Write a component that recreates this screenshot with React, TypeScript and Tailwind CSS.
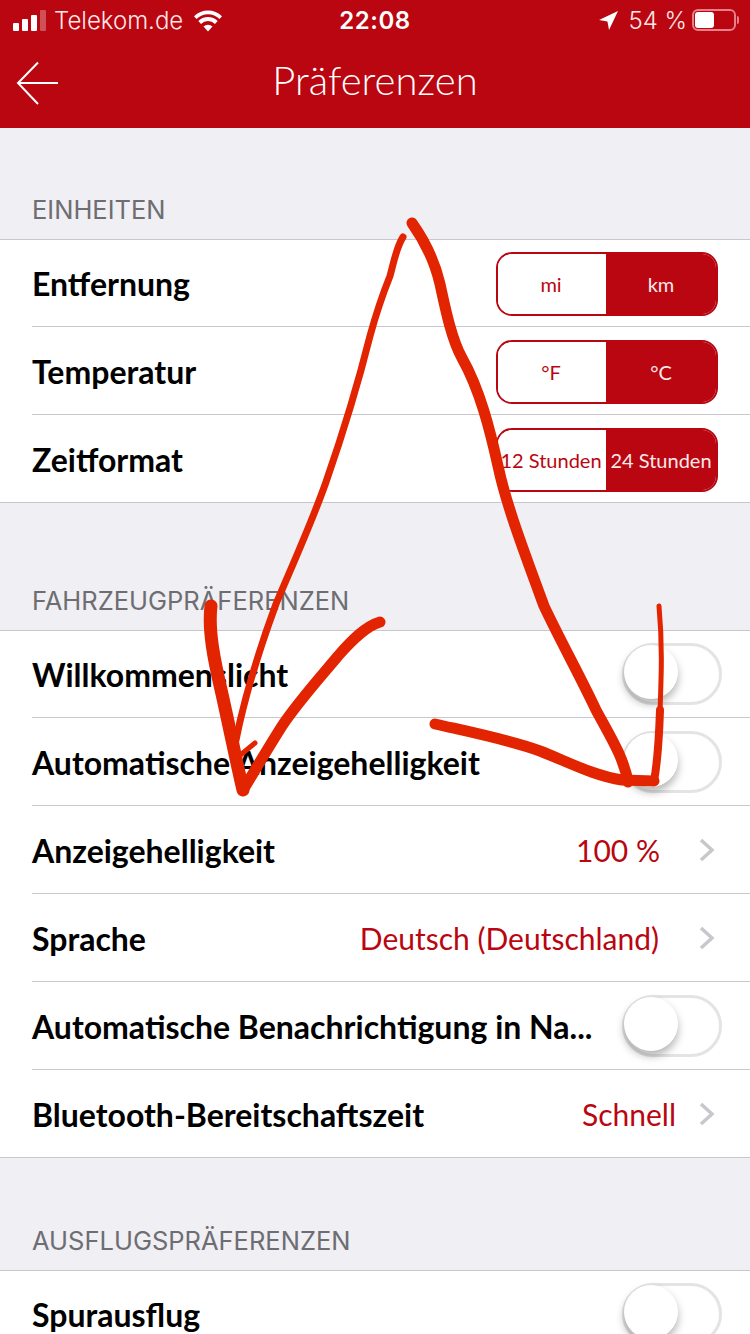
const lato = "font-['Lato','Noto_Sans',sans-serif]";

function Toggle() {
  return (
    <div className="relative w-[100px] h-[62px] rounded-full border-[3px] border-[#e4e4e4] bg-white shrink-0">
      <div className="absolute left-[-1px] top-[-1px] w-[54px] h-[54px] rounded-full bg-white shadow-[0_5px_8px_rgba(0,0,0,0.3)]" />
    </div>
  );
}

function Chevron() {
  return (
    <svg width="18" height="26" viewBox="0 0 18 26" className="shrink-0" fill="none">
      <path d="M3 3l11 10L3 23" stroke="#c7c7cc" strokeWidth="3.5" />
    </svg>
  );
}

function Segment({ a, b }: { a: string; b: string }) {
  return (
    <div className="flex w-[222px] h-[64px] mt-[2px] rounded-[16px] border-2 border-[#b90610] overflow-hidden shrink-0 text-[20px] whitespace-nowrap">
      <div className="w-[108px] pr-[2px] flex items-center justify-center bg-white text-[#b90610]">{a}</div>
      <div className="flex-1 flex items-center justify-center bg-[#b90610] text-[#fbeaea]">{b}</div>
    </div>
  );
}

function Row({ label, first, last, children }: { label: string; first?: boolean; last?: boolean; children?: React.ReactNode }) {
  return (
    <div className={`${first ? "h-[87px]" : "h-[88px]"} bg-white ${last ? "border-b border-[#c8c8cc]" : ""}`}>
      <div className={`h-full ml-[32px] flex items-center justify-between ${last ? "" : "border-b border-[#c8c8cc]"}`}>
        <span className="text-[32px] pt-[2px] font-bold text-black whitespace-nowrap">{label}</span>
        {children}
      </div>
    </div>
  );
}

function Header({ title, h }: { title: string; h: string }) {
  return (
    <div className={`${h} flex items-end pl-[32px] pb-[14px] font-['Inter',sans-serif] font-normal text-[25.500px] leading-[30px] text-[#6d6d72] border-b border-[#c8c8cc]`}>
      {title}
    </div>
  );
}

function Value({ text }: { text: string }) {
  return <span className="text-[30px] pt-[2px] text-[#b90610] whitespace-nowrap">{text}</span>;
}

export default function App() {
  return (
    <div className={`relative w-[750px] h-[1334px] overflow-hidden bg-[#efeff4] ${lato}`}>
      <div className="h-[128px] bg-[#b90610] text-white">
        <div className="h-[40px] flex items-center justify-between pl-[13px] pr-[14px] font-['Inter',sans-serif] text-[24px] relative">
          <div className="flex items-center">
            <div className="flex items-end gap-[3px] h-[21px]">
              <div className="w-[6px] h-[8px] rounded-[1px] bg-white" />
              <div className="w-[6px] h-[12px] rounded-[1px] bg-white" />
              <div className="w-[6px] h-[16px] rounded-[1px] bg-white" />
              <div className="w-[6px] h-[21px] rounded-[1px] bg-white/30" />
            </div>
            <span className="ml-[8px] mt-[2px] font-light text-[#fde8e8]">Telekom.de</span>
            <svg width="30" height="23" viewBox="0 0 30 22" fill="white" className="ml-[10px]">
              <path d="M15 22l-4.500-5a6.500 6.500 0 0 1 9 0z" />
              <path d="M8 14.500l-2.700-3a13.500 13.500 0 0 1 19.400 0l-2.700 3a9.800 9.800 0 0 0-14 0z" />
              <path d="M3.500 9.500L1 6.800a20 20 0 0 1 28 0l-2.500 2.700a16.500 16.500 0 0 0-23 0z" />
            </svg>
          </div>
          <span className="absolute left-0 right-0 text-center font-semibold text-[24px] tracking-[0.5px] mt-[2px]">22:08</span>
          <div className="flex items-center">
            <svg width="19" height="19" viewBox="0 0 18 18" fill="white"><path d="M18 0L0 8.500l8 1.500 1.500 8z" /></svg>
            <span className="ml-[10px] mt-[2px] font-light text-[#fde8e8]">54 %</span>
            <div className="relative ml-[5px] w-[44px] h-[22px] rounded-[6px] border-2 border-[#e8808a] p-[1px]">
              <div className="w-[19px] h-full rounded-[3px] bg-white" />
              <div className="absolute right-[-5px] top-[5px] w-[2px] h-[8px] rounded-r bg-[#e8808a]" />
            </div>
          </div>
        </div>
        <div className="h-[88px] relative flex items-center justify-center pb-[8px]">
          <svg width="44" height="44" viewBox="0 0 44 44" fill="none" className="absolute left-[16px] top-[21px]">
            <path d="M42 22H2M22 1.500L2 22l20 21" stroke="white" strokeWidth="2" />
          </svg>
          <span className="text-[40px] font-light leading-none">Präferenzen</span>
        </div>
      </div>

      <Header title="EINHEITEN" h="h-[112px]" />
      <Row first label="Entfernung"><div className="mr-[32px]"><Segment a="mi" b="km" /></div></Row>
      <Row label="Temperatur"><div className="mr-[32px]"><Segment a="°F" b="°C" /></div></Row>
      <Row label="Zeitformat" last><div className="mr-[32px]"><Segment a="12 Stunden" b="24 Stunden" /></div></Row>

      <Header title="FAHRZEUGPRÄFERENZEN" h="h-[128px]" />
      <Row first label="Willkommenslicht"><div className="mr-[28px]"><Toggle /></div></Row>
      <Row label="Automatische Anzeigehelligkeit"><div className="mr-[28px]"><Toggle /></div></Row>
      <Row label="Anzeigehelligkeit">
        <div className="flex items-center mr-[34px] gap-[38px]"><Value text="100 %" /><Chevron /></div>
      </Row>
      <Row label="Sprache">
        <div className="flex items-center mr-[34px] gap-[39px]"><Value text="Deutsch (Deutschland)" /><Chevron /></div>
      </Row>
      <Row label="Automatische Benachrichtigung in Na..."><div className="mr-[28px]"><Toggle /></div></Row>
      <Row label="Bluetooth-Bereitschaftszeit" last>
        <div className="flex items-center mr-[34px] gap-[22px]"><Value text="Schnell" /><Chevron /></div>
      </Row>

      <Header title="AUSFLUGSPRÄFERENZEN" h="h-[113px]" />
      <Row first label="Spurausflug"><div className="mr-[28px]"><Toggle /></div></Row>

      <svg className="absolute left-0 top-0 pointer-events-none" width="750" height="1334" viewBox="0 0 750 1334" fill="none" stroke="#e32400" strokeLinecap="round" strokeLinejoin="round">
        <path d="M403 237C396 248 394 262 390 276C382 296 376 314 370 336C358 384 342 436 326 482C312 522 292 566 276 604C262 642 246 690 236 740" strokeWidth="7" />
        <path d="M211 606C208 630 214 660 222 694C230 730 236 760 243 790" strokeWidth="13" />
        <path d="M380 622C366 626 352 640 338 656C318 680 298 702 282 726C268 748 254 772 243 790" strokeWidth="11" />
        <path d="M255 743L238 757" strokeWidth="5" />
        <path d="M412 223C424 240 434 258 440 284C446 312 452 340 462 358C480 390 490 430 498 466C506 504 524 552 544 606C560 640 580 676 596 710C610 736 624 758 628 782" strokeWidth="11" />
        <path d="M435 724C470 732 510 740 540 751C566 761 594 776 622 780L654 781" strokeWidth="11" />
        <path d="M654 781C658 760 660 720 661 680C662 650 661 628 659 606" strokeWidth="5" />
        <path d="M654 781C657 765 659 740 660 710" strokeWidth="8" />
      </svg>
    </div>
  );
}
